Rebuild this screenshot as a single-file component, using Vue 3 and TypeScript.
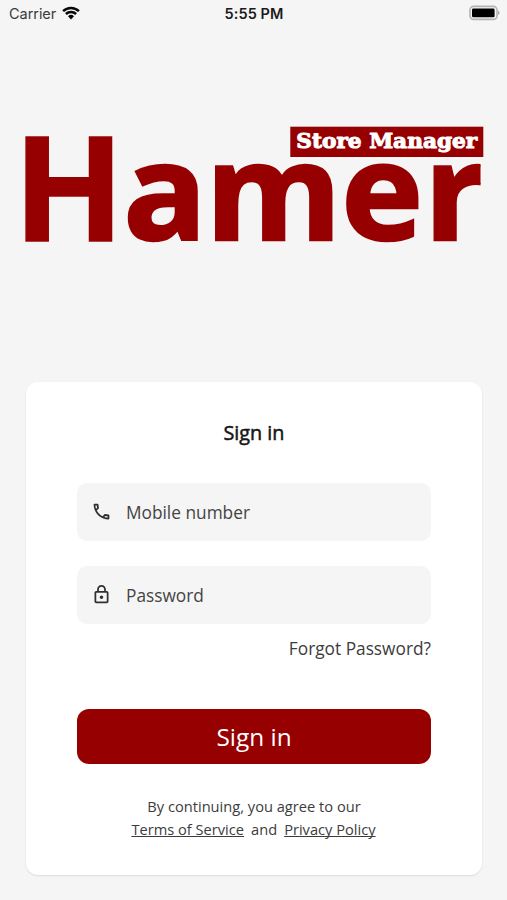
<script setup lang="ts">
import { ref } from 'vue'

const mobile = ref<string>('')
const password = ref<string>('')
</script>

<template>
  <main class="screen">
    <header class="status">
      <div class="carrier">
        <span>Carrier</span>
        <svg class="wifi" viewBox="0 0 18 14" aria-hidden="true">
          <path d="M1.1 5.1a11.3 11.3 0 0 1 15.8 0M3.9 8a7.3 7.3 0 0 1 10.2 0" />
          <path class="wifi-core" d="M9 13.4 6 10.3a4.3 4.3 0 0 1 6 0Z" />
        </svg>
      </div>
      <strong class="clock">5:55 PM</strong>
      <svg class="battery" viewBox="0 0 32 16" aria-hidden="true">
        <rect class="shell" x="1" y="1.4" width="27" height="13" rx="3.6" />
        <rect class="charge" x="3" y="3.5" width="22.6" height="8.8" rx="1.4" />
        <path class="nub" d="M29 5.8c2 .7 2 3.5 0 4.2Z" />
      </svg>
    </header>

    <svg class="logo" viewBox="0 0 460 120" role="img" aria-label="Hamer Store Manager">
      <defs>
        <clipPath id="brand-edge"><rect x="0" y="0" width="455.5" height="120" /></clipPath>
      </defs>
      <g clip-path="url(#brand-edge)">
        <text class="brand cap" x="-12" y="115.7">H</text>
        <text class="brand" transform="translate(0 115.3) scale(1 0.967)" x="98.3 180.6 316.3 399" y="0">amer</text>
      </g>
      <rect class="tag" x="265.3" y="1.7" width="193" height="30.3" />
      <text class="tagline" x="271.3" y="23.4" textLength="181" lengthAdjust="spacingAndGlyphs">Store Manager</text>
    </svg>

    <form class="card" @submit.prevent>
      <h1 class="title">Sign in</h1>
      <label class="field">
        <svg class="icon" viewBox="0 0 24 24" aria-hidden="true">
          <path d="M6.54 5c.06.89.21 1.76.45 2.59l-1.2 1.2c-.41-1.2-.67-2.47-.76-3.79h1.51m9.86 12.02c.85.24 1.72.39 2.6.45v1.49c-1.32-.09-2.59-.35-3.8-.75l1.2-1.19M7.5 3H4c-.55 0-1 .45-1 1 0 9.39 7.61 17 17 17 .55 0 1-.45 1-1v-3.49c0-.55-.45-1-1-1-1.24 0-2.45-.2-3.57-.57-.1-.04-.21-.05-.31-.05-.26 0-.51.1-.71.29l-2.2 2.2c-2.83-1.45-5.15-3.76-6.59-6.59l2.2-2.2c.28-.28.36-.67.25-1.02C8.7 6.45 8.5 5.25 8.5 4c0-.55-.45-1-1-1z" />
        </svg>
        <input v-model="mobile" type="tel" placeholder="Mobile number" />
      </label>
      <label class="field second">
        <svg class="icon" viewBox="0 0 24 24" aria-hidden="true">
          <path d="M18 8h-1V6c0-2.76-2.24-5-5-5S7 3.24 7 6v2H6c-1.1 0-2 .9-2 2v10c0 1.1.9 2 2 2h12c1.1 0 2-.9 2-2V10c0-1.1-.9-2-2-2zM9 6c0-1.66 1.34-3 3-3s3 1.34 3 3v2H9V6zm9 14H6V10h12v10zm-6-3c1.1 0 2-.9 2-2s-.9-2-2-2-2 .9-2 2 .9 2 2 2z" />
        </svg>
        <input v-model="password" type="password" placeholder="Password" />
      </label>
      <a class="forgot">Forgot Password?</a>
      <button class="submit" type="submit">Sign in</button>
      <div class="terms">
        <span>By continuing, you agree to our</span>
        <div class="links"><a>Terms of Service</a><span>and</span><a>Privacy Policy</a></div>
      </div>
    </form>
  </main>
</template>

<style>
body {
  margin: 0;
  background: #f5f5f5;
}
</style>

<style scoped>
.screen {
  box-sizing: border-box;
  width: 507px;
  height: 900px;
  overflow: hidden;
  display: flex;
  flex-direction: column;
  background: #f5f5f5;
  font-family: "Open Sans", "Noto Sans", sans-serif;
  color: #3c3c3c;
}
.status {
  height: 28px;
  box-sizing: border-box;
  padding: 0 6px 0 9px;
  display: grid;
  grid-template-columns: 1fr auto 1fr;
  align-items: center;
  font-family: Inter, sans-serif;
  font-size: 14.5px;
  line-height: 20px;
  color: #1b1b1b;
}
.carrier {
  display: flex;
  align-items: center;
  gap: 6px;
  color: #3a3a3a;
  letter-spacing: -0.05px;
}
.wifi {
  width: 18px;
  height: 14px;
  margin-top: -3px;
  fill: none;
  stroke: #080808;
  stroke-width: 2.5;
}
.wifi-core {
  fill: #080808;
  stroke: none;
}
.clock {
  margin-right: 2px;
  font-weight: 600;
  letter-spacing: 0.1px;
}
.battery {
  width: 32px;
  height: 16px;
  margin-top: -2px;
  justify-self: end;
}
.shell {
  fill: #f5f5f5;
  stroke: #b4b4b4;
  stroke-width: 1.6;
}
.charge {
  fill: #000;
}
.nub {
  fill: #a8a8a8;
}
.logo {
  width: 460px;
  height: 120px;
  margin: 97px 0 0 25px;
  flex: none;
  overflow: visible;
}
.brand {
  font-weight: 700;
  font-size: 138.5px;
  fill: #960000;
  stroke: #960000;
  stroke-width: 2.6;
}
.brand.cap {
  font-size: 146px;
  stroke-width: 1.5;
}
.tag {
  fill: #960000;
}
.tagline {
  font-family: "DejaVu Serif", serif;
  font-weight: 700;
  font-size: 21px;
  fill: #fff;
  stroke: #fff;
  stroke-width: 1;
  stroke-linejoin: round;
}
.card {
  box-sizing: border-box;
  width: 456px;
  height: 493px;
  margin: 137px 0 0 26px;
  padding: 36px 51px 0;
  display: flex;
  flex-direction: column;
  background: #fff;
  border-radius: 12px;
  box-shadow: 0 1px 2px rgba(0, 0, 0, 0.1);
}
.title {
  margin: 0 0 34.5px;
  font-size: 19.8px;
  line-height: 30px;
  font-weight: 400;
  text-align: center;
  color: #161616;
  -webkit-text-stroke: 0.5px #161616;
}
.field {
  height: 58px;
  box-sizing: border-box;
  padding: 0 14px 0 13.5px;
  display: flex;
  align-items: center;
  gap: 14.5px;
  border-radius: 10px;
  background: #f5f5f5;
}
.second {
  margin-top: 25px;
}
.icon {
  width: 21px;
  height: 21px;
  flex: none;
  fill: #303030;
}
input {
  flex: 1;
  min-width: 0;
  padding: 3px 0 0;
  border: 0;
  outline: 0;
  background: transparent;
  font: 400 17.3px/26px "Open Sans", sans-serif;
  color: #444;
}
input::placeholder {
  color: #444;
  opacity: 1;
}
.forgot {
  margin-top: 12px;
  align-self: flex-end;
  font-size: 17.3px;
  line-height: 26px;
}
.submit {
  height: 55px;
  margin-top: 47.5px;
  padding: 0;
  border: 0;
  border-radius: 12px;
  background: #960000;
  color: #fff;
  font: 400 24.4px/34px "Open Sans", sans-serif;
}
.terms {
  margin-top: 30.5px;
  display: flex;
  flex-direction: column;
  align-items: center;
  font-size: 14.65px;
  line-height: 23px;
}
.links {
  display: flex;
  gap: 7px;
  margin-right: 1px;
}
.links a {
  text-decoration: underline;
  text-decoration-skip-ink: none;
}
</style>
